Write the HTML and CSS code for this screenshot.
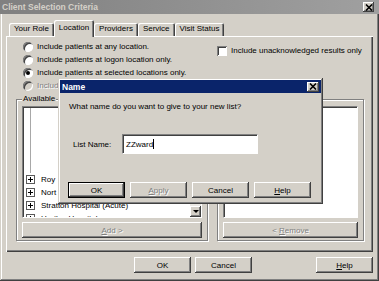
FILE: index.html
```html
<!DOCTYPE html>
<html lang="en">
<head>
    <meta charset="UTF-8">
    <title>Client Selection Criteria</title>
    <link rel="stylesheet" href="styles.css">
</head>
<body>
<div class="window">
    <div class="titlebar">
        <span class="title">Client Selection Criteria</span>
        <span class="close"><svg width="8" height="7" viewBox="0 0 8 7"><path d="M1 0.5L7 6.5M7 0.5L1 6.5" stroke="#000" stroke-width="1.6"/></svg></span>
    </div>
    <div class="content">
        <div class="tabs">
            <div class="tab">Your Role</div>
            <div class="tab active">Location</div>
            <div class="tab">Providers</div>
            <div class="tab">Service</div>
            <div class="tab">Visit Status</div>
        </div>
        <div class="panel">
            <div class="options">
                <div class="radios">
                    <label class="radio"><span class="mark"></span>Include patients at any location.</label>
                    <label class="radio"><span class="mark"></span>Include patients at logon location only.</label>
                    <label class="radio"><span class="mark checked"></span>Include patients at selected locations only.</label>
                    <label class="radio disabled"><span class="mark"></span>Include</label>
                </div>
                <label class="check"><span class="box"></span>Include unacknowledged results only</label>
            </div>
            <div class="groups">
                <fieldset class="group group-left">
                    <legend>Available</legend>
                    <div class="list">
                        <div class="tree">
                            <div class="children">
                                <div class="row"></div>
                                <div class="row"></div>
                                <div class="row"></div>
                                <div class="row"></div>
                                <div class="row"></div>
                            </div>
                            <div class="row node"><span class="plus"></span>Roy</div>
                            <div class="row node"><span class="plus"></span>Nort</div>
                            <div class="row node"><span class="plus"></span>Stratton Hospital (Acute)</div>
                            <div class="row node"><span class="plus"></span>Hartley Hospital</div>
                        </div>
                        <div class="scrollbar">
                            <span class="scroll-btn"></span>
                            <span class="scroll-btn down"></span>
                        </div>
                    </div>
                    <button class="btn wide" disabled><u>A</u>dd &gt;</button>
                </fieldset>
                <fieldset class="group group-right">
                    <legend>Selected</legend>
                    <div class="list"></div>
                    <button class="btn wide" disabled>&lt; <u>R</u>emove</button>
                </fieldset>
            </div>
        </div>
        <div class="footer">
            <button class="btn">OK</button>
            <button class="btn">Cancel</button>
            <button class="btn help"><u>H</u>elp</button>
        </div>
    </div>

    <div class="dialog">
        <div class="dialog-title">
            <span>Name</span>
            <span class="dialog-close"><svg width="8" height="7" viewBox="0 0 8 7"><path d="M1 0.5L7 6.5M7 0.5L1 6.5" stroke="#000" stroke-width="1.6"/></svg></span>
        </div>
        <p class="message">What name do you want to give to your new list?</p>
        <div class="field">
            <label>List Name:</label>
            <div class="input">ZZward<span class="caret"></span></div>
        </div>
        <div class="dialog-btns">
            <button class="btn default">OK</button>
            <button class="btn" disabled><u>A</u>pply</button>
            <button class="btn">Cancel</button>
            <button class="btn"><u>H</u>elp</button>
        </div>
    </div>
</div>
</body>
</html>
```

FILE: styles.css
```css
* {
    box-sizing: border-box;
}
body {
    margin: 0;
    font-family: "Liberation Sans", Arial, sans-serif;
    font-size: 8px;
    color: #000;
}
.window {
    position: relative;
    width: 379px;
    height: 281px;
    background: #d4d0c8;
    display: flex;
    flex-direction: column;
    box-shadow: inset -1px -1px #404040, inset 1px 0 #d4d0c8, inset -2px -2px #808080, inset 2px 0 #fff;
}
.titlebar {
    height: 14px;
    background: linear-gradient(to right, #808080, #a0a0a0);
    display: flex;
    align-items: center;
    justify-content: space-between;
    padding: 0 5px 0 2px;
}
.title {
    color: #d4d0c8;
    font-weight: bold;
    font-size: 8.5px;
}
.close, .dialog-close {
    width: 11px;
    height: 10px;
    background: #d4d0c8;
    display: flex;
    align-items: center;
    justify-content: center;
    box-shadow: inset -1px -1px #404040, inset 1px 1px #fff, inset -2px -2px #808080;
}
.content {
    flex: 1;
    padding: 6px 6px 0 6px;
}

/* tabs */
.tabs {
    height: 16px;
    display: flex;
    align-items: flex-end;
    padding-left: 3px;
}
.tab {
    height: 13px;
    line-height: 12px;
    padding: 0 5px;
    border-radius: 2px 2px 0 0;
    box-shadow: inset 1px 1px #fff, inset -1px 0 #404040, inset -2px 0 #808080;
}
.tab.active {
    position: relative;
    z-index: 1;
    height: 17px;
    line-height: 15px;
    margin-bottom: -1px;
    background: #d4d0c8;
}
.panel {
    height: 216px;
    padding-top: 4px;
    box-shadow: inset 1px 1px #fff, inset -1px -1px #404040, inset -2px -2px #808080;
}
.options {
    display: flex;
}
.radios {
    width: 211px;
    padding-left: 17px;
}
.radio, .check {
    display: flex;
    align-items: center;
    height: 13px;
}
.mark {
    position: relative;
    width: 10px;
    height: 10px;
    margin-right: 4px;
    border-radius: 50%;
    background: #fff;
    box-shadow: inset 1px 1px #808080, inset -1px -1px #fff, inset 2px 2px #404040;
}
.mark.checked::after {
    content: "";
    position: absolute;
    left: 3px;
    top: 3px;
    width: 4px;
    height: 4px;
    border-radius: 50%;
    background: #000;
}
.radio.disabled {
    color: #808080;
    text-shadow: 1px 1px #fff;
}
.radio.disabled .mark {
    background: #d4d0c8;
}
.check {
    margin-top: 4px;
}
.box {
    width: 10px;
    height: 10px;
    margin-right: 4px;
    background: #fff;
    box-shadow: inset 1px 1px #808080, inset -1px -1px #fff, inset 2px 2px #404040;
}

/* group boxes */
.groups {
    display: flex;
    gap: 9px;
    margin-top: 2px;
    padding: 0 9px 0 10px;
}
.group {
    margin: 0;
    min-width: 0;
    padding: 2px 5px 2px 5px;
    border: 1px solid #808080;
    box-shadow: 1px 1px 0 #fff, inset 1px 1px 0 #fff;
}
.group legend {
    padding: 0 1px;
    line-height: 10px;
    background: #d4d0c8;
}
.group-left {
    width: 192px;
}
.group-right {
    flex: 1;
}
.list {
    position: relative;
    height: 112px;
    margin-bottom: 4px;
    background: #fff;
    overflow: hidden;
    border: 1px solid;
    border-color: #808080 #fff #fff #808080;
    box-shadow: inset 1px 1px #404040;
    display: flex;
}
.tree {
    flex: 1;
    padding: 1px 0 0 1px;
}
.row {
    height: 13px;
    line-height: 13px;
    white-space: nowrap;
}
.children {
    margin-left: 6px;
    padding-left: 30px;
    border-left: 1px solid #a8a8a8;
}
.node {
    display: flex;
    align-items: center;
    padding-left: 2px;
}
.plus {
    position: relative;
    width: 9px;
    height: 9px;
    margin-right: 6px;
    border: 1px solid #5a5a5a;
    background: #fff;
}
.plus::before, .plus::after {
    content: "";
    position: absolute;
    background: #000;
}
.plus::before {
    left: 1px;
    top: 3px;
    width: 5px;
    height: 1px;
}
.plus::after {
    left: 3px;
    top: 1px;
    width: 1px;
    height: 5px;
}
.scrollbar {
    width: 11px;
    margin: 1px 0 0;
    background: #ebe9e5;
    display: flex;
    flex-direction: column;
    justify-content: space-between;
}
.scroll-btn {
    height: 11px;
    display: flex;
    align-items: center;
    justify-content: center;
    background: #d4d0c8;
    box-shadow: inset -1px -1px #404040, inset 1px 1px #fff, inset -2px -2px #808080;
}
.scroll-btn.down::after {
    content: "";
    border-left: 3px solid transparent;
    border-right: 3px solid transparent;
    border-top: 3px solid #000;
}

/* buttons */
.btn {
    width: 57px;
    height: 16px;
    padding: 0;
    border: 0;
    font: inherit;
    color: #000;
    background: #d4d0c8;
    box-shadow: inset -1px -1px #404040, inset 1px 1px #fff, inset -2px -2px #808080;
}
.btn:disabled {
    color: #808080;
    text-shadow: 1px 1px #fff;
}
.btn.wide {
    display: block;
    width: 100%;
}
.btn.default {
    border: 1px solid #000;
}
.footer {
    display: flex;
    justify-content: flex-end;
    gap: 4px;
    margin-top: 5px;
}
.footer .help {
    margin-left: 60px;
}

/* name dialog */
.dialog {
    position: absolute;
    left: 58px;
    top: 78px;
    width: 265px;
    height: 126px;
    padding: 2px;
    background: #d4d0c8;
    box-shadow: inset -1px -1px #404040, inset 1px 1px #d4d0c8, inset -2px -2px #808080, inset 2px 2px #fff;
}
.dialog-title {
    height: 13px;
    padding: 0 2px;
    display: flex;
    align-items: center;
    justify-content: space-between;
    background: #0a246a;
    color: #fff;
    font-weight: bold;
    font-size: 8.5px;
}
.dialog-close {
    width: 12px;
}
.message {
    margin: 9px 0 0 9px;
    line-height: 10px;
}
.field {
    display: flex;
    align-items: center;
    margin: 22px 0 0 13px;
}
.field label {
    width: 49px;
}
.input {
    width: 136px;
    height: 20px;
    padding-left: 3px;
    display: flex;
    align-items: center;
    background: #fff;
    border: 1px solid;
    border-color: #808080 #fff #fff #808080;
    box-shadow: inset 1px 1px #404040;
}
.caret {
    width: 1px;
    height: 10px;
    background: #000;
}
.dialog-btns {
    display: flex;
    gap: 5px;
    margin: 28px 0 0 8px;
}
```
